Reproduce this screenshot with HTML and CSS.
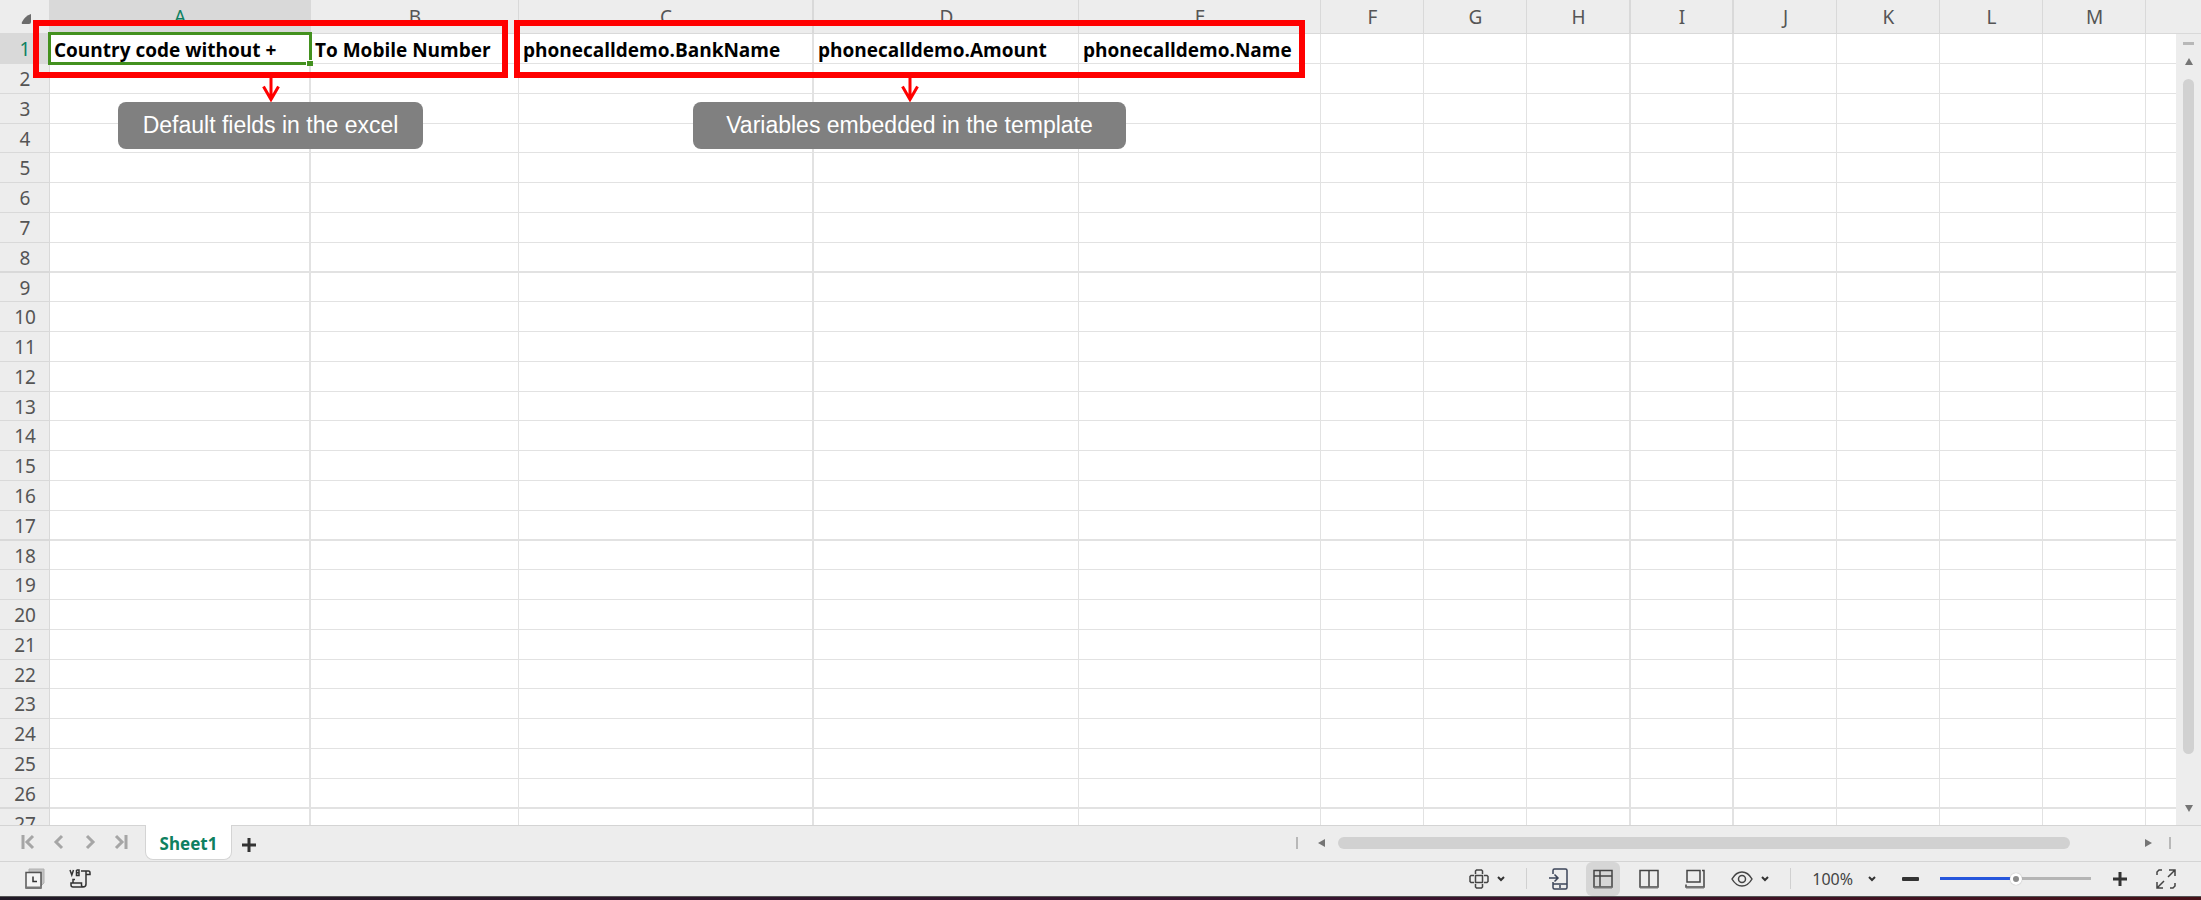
FILE: index.html
```html
<!DOCTYPE html>
<html lang="en">
<head>
<meta charset="utf-8">
<title>Sheet1</title>
<link rel="stylesheet" href="styles.css">
</head>
<body>
<main class="pane">
  <div class="sheet">
    <table class="grid">
      <colgroup><col class="c-head"><col class="c-a"><col class="c-b"><col class="c-c"><col class="c-d"><col class="c-e"><col class="c-n"><col class="c-n"><col class="c-h"><col class="c-n"><col class="c-n"><col class="c-n"><col class="c-n"><col class="c-n"><col></colgroup>
      <thead>
        <tr><th class="corner"><svg width="10" height="10" viewBox="0 0 10 10"><path d="M10 0V8Q10 10 8 10H2Q0 10 1 8Q4 2 10 0Z" fill="#6b6b6b"/></svg></th><th class="active">A</th><th>B</th><th>C</th><th>D</th><th>E</th><th>F</th><th>G</th><th>H</th><th>I</th><th>J</th><th>K</th><th>L</th><th>M</th><th></th></tr>
      </thead>
      <tbody>
        <tr class="titles"><th class="active">1</th><td>Country code without +</td><td>To Mobile Number</td><td>phonecalldemo.BankName</td><td>phonecalldemo.Amount</td><td>phonecalldemo.Name</td><td></td><td></td><td></td><td></td><td></td><td></td><td></td><td></td><td></td></tr>
        <tr><th>2<td><td><td><td><td><td><td><td><td><td><td><td><td><td>
        <tr><th>3<td><td><td><td><td><td><td><td><td><td><td><td><td><td>
        <tr><th>4<td><td><td><td><td><td><td><td><td><td><td><td><td><td>
        <tr><th>5<td><td><td><td><td><td><td><td><td><td><td><td><td><td>
        <tr><th>6<td><td><td><td><td><td><td><td><td><td><td><td><td><td>
        <tr><th>7<td><td><td><td><td><td><td><td><td><td><td><td><td><td>
        <tr><th>8<td><td><td><td><td><td><td><td><td><td><td><td><td><td>
        <tr><th>9<td><td><td><td><td><td><td><td><td><td><td><td><td><td>
        <tr><th>10<td><td><td><td><td><td><td><td><td><td><td><td><td><td>
        <tr><th>11<td><td><td><td><td><td><td><td><td><td><td><td><td><td>
        <tr><th>12<td><td><td><td><td><td><td><td><td><td><td><td><td><td>
        <tr><th>13<td><td><td><td><td><td><td><td><td><td><td><td><td><td>
        <tr><th>14<td><td><td><td><td><td><td><td><td><td><td><td><td><td>
        <tr><th>15<td><td><td><td><td><td><td><td><td><td><td><td><td><td>
        <tr><th>16<td><td><td><td><td><td><td><td><td><td><td><td><td><td>
        <tr><th>17<td><td><td><td><td><td><td><td><td><td><td><td><td><td>
        <tr><th>18<td><td><td><td><td><td><td><td><td><td><td><td><td><td>
        <tr><th>19<td><td><td><td><td><td><td><td><td><td><td><td><td><td>
        <tr><th>20<td><td><td><td><td><td><td><td><td><td><td><td><td><td>
        <tr><th>21<td><td><td><td><td><td><td><td><td><td><td><td><td><td>
        <tr><th>22<td><td><td><td><td><td><td><td><td><td><td><td><td><td>
        <tr><th>23<td><td><td><td><td><td><td><td><td><td><td><td><td><td>
        <tr><th>24<td><td><td><td><td><td><td><td><td><td><td><td><td><td>
        <tr><th>25<td><td><td><td><td><td><td><td><td><td><td><td><td><td>
        <tr><th>26<td><td><td><td><td><td><td><td><td><td><td><td><td><td>
        <tr><th>27<td><td><td><td><td><td><td><td><td><td><td><td><td><td>
      </tbody>
    </table>
    <div class="selection"><span class="handle"></span></div>
    <div class="frame frame-default"></div>
    <div class="frame frame-vars"></div>
    <div class="note note-default">
      <svg width="18" height="24" viewBox="0 0 18 24"><path d="M9 0V21M1.500 8.500L9 21.500L16.500 8.500" fill="none" stroke="#f00" stroke-width="3"/></svg>
      <p>Default fields in the excel</p>
    </div>
    <div class="note note-vars">
      <svg width="18" height="24" viewBox="0 0 18 24"><path d="M9 0V21M1.500 8.500L9 21.500L16.500 8.500" fill="none" stroke="#f00" stroke-width="3"/></svg>
      <p>Variables embedded in the template</p>
    </div>
  </div>
  <div class="vscroll">
    <span class="split-h"></span>
    <button aria-label="Scroll up"><svg width="8" height="7" viewBox="0 0 8 7"><path d="M4 0L8 7H0Z"/></svg></button>
    <div class="track"><div class="thumb"></div></div>
    <button aria-label="Scroll down"><svg width="8" height="7" viewBox="0 0 8 7"><path d="M0 0H8L4 7Z"/></svg></button>
  </div>
</main>

<nav class="tabs">
  <div class="pager">
    <button aria-label="First sheet"><svg width="14" height="16" viewBox="0 0 14 16"><path d="M2 1V15M12 2L6 8L12 14"/></svg></button>
    <button aria-label="Previous sheet"><svg width="14" height="16" viewBox="0 0 14 16"><path d="M10 2L4 8L10 14"/></svg></button>
    <button aria-label="Next sheet"><svg width="14" height="16" viewBox="0 0 14 16"><path d="M4 2L10 8L4 14"/></svg></button>
    <button aria-label="Last sheet"><svg width="14" height="16" viewBox="0 0 14 16"><path d="M2 2L8 8L2 14M12 1V15"/></svg></button>
  </div>
  <button class="tab">Sheet1</button>
  <button class="add" aria-label="Add sheet"><svg width="14" height="14" viewBox="0 0 14 14"><path d="M7 0V14M0 7H14" stroke="#333" stroke-width="3"/></svg></button>
  <div class="hscroll">
    <span class="split-v"></span>
    <button aria-label="Scroll left"><svg width="7" height="8" viewBox="0 0 7 8"><path d="M7 0V8L0 4Z"/></svg></button>
    <div class="htrack"><div class="hthumb"></div></div>
    <button aria-label="Scroll right"><svg width="7" height="8" viewBox="0 0 7 8"><path d="M0 0V8L7 4Z"/></svg></button>
    <span class="split-v"></span>
  </div>
</nav>

<footer class="status">
  <button aria-label="Backup history"><svg width="20" height="21" viewBox="0 0 20 21"><path d="M4 3V1H19V15L16 18V4H4Z" fill="#c4c4c4" stroke="#b0b0b0"/><path d="M1 4.500H16V20H1Z" fill="#f4f4f4" stroke="#555" stroke-width="1.500"/><path d="M1 18.500H16V20.500H1Z" fill="#777"/><path d="M8 8.500V13.500H12" fill="none" stroke="#333" stroke-width="1.500"/></svg></button>
  <button class="macro" aria-label="Macro editor"><svg width="22" height="20" viewBox="0 0 22 20" fill="none" stroke="#333" stroke-width="1.500"><path d="M1 1L2.800 6L4.500 1M7.500 1V6.500H10V1H7.500M7.500 3.700H10M12 2H19.500Q21 2 21 4V5.500H17M17 2V15Q17 18 14 18H4Q2 18 2 16V14H12.500V16.500Q13 18 15 18M4 14V10.500H6"/></svg></button>
  <div class="tools">
    <button class="drop" aria-label="Reading layout"><svg width="20" height="20" viewBox="0 0 20 20" fill="none" stroke="#444" stroke-width="1.500"><path d="M6.500 6.500H13.500V13.500H6.500ZM6.500 5V2L7.500 1H12.500L13.500 2V5M6.500 15V18L7.500 19H12.500L13.500 18V15M5 6.500H2L1 7.500V12.500L2 13.500H5M15 6.500H18L19 7.500V12.500L18 13.500H15"/></svg><svg class="caret" width="8" height="6" viewBox="0 0 8 6"><path d="M1 1L4 4L7 1"/></svg></button>
    <span class="rule"></span>
    <button class="phone" aria-label="Send to phone"><svg width="20" height="22" viewBox="0 0 20 22" fill="none" stroke="#3b4458" stroke-width="1.500"><path d="M5 6V2.500Q5 1 6.500 1H17.500Q19 1 19 2.500V19.500Q19 21 17.500 21H6.500Q5 21 5 19.500V14M5 16H19M12 17V20M1 10H10M6.500 6.500L10 10L6.500 13.500"/></svg></button>
    <button class="view on" aria-label="Normal view"><svg width="20" height="20" viewBox="0 0 20 20" fill="none" stroke="#444" stroke-width="1.500"><path d="M1 1.500H19V18H1ZM1 7H19M7 1.500V18"/><path d="M1 18.500H19" stroke="#777" stroke-width="2"/></svg></button>
    <button class="view" aria-label="Page break view"><svg width="20" height="20" viewBox="0 0 20 20" fill="none" stroke="#444" stroke-width="1.500"><path d="M1 1.500H19V18H1ZM10 1.500V18"/><path d="M1 18.500H19" stroke="#777" stroke-width="2"/></svg></button>
    <button class="view" aria-label="Page layout view"><svg width="20" height="20" viewBox="0 0 20 20" fill="none" stroke="#444" stroke-width="1.500"><path d="M2 1.500H15V13H2ZM17 1.500H19V18H1V15.500"/><path d="M1 18.500H19" stroke="#777" stroke-width="2"/></svg></button>
    <button class="drop eye" aria-label="Eye protection"><svg width="22" height="16" viewBox="0 0 22 16" fill="none" stroke="#444" stroke-width="1.500"><path d="M1 8Q5 1 11 1T21 8Q17 15 11 15T1 8Z"/><circle cx="11" cy="8" r="3.500"/></svg><svg class="caret" width="8" height="6" viewBox="0 0 8 6"><path d="M1 1L4 4L7 1"/></svg></button>
    <span class="rule"></span>
    <button class="drop zoom">100%<svg class="caret" width="8" height="6" viewBox="0 0 8 6"><path d="M1 1L4 4L7 1"/></svg></button>
    <button class="minus" aria-label="Zoom out"><svg width="17" height="4" viewBox="0 0 17 4"><rect width="17" height="4" rx="1" fill="#333"/></svg></button>
    <input class="slider" type="range" min="0" max="100" value="50" aria-label="Zoom level">
    <button class="plus" aria-label="Zoom in"><svg width="14" height="14" viewBox="0 0 14 14"><path d="M7 0V14M0 7H14" stroke="#333" stroke-width="3"/></svg></button>
    <button aria-label="Full screen"><svg width="20" height="20" viewBox="0 0 20 20" fill="none" stroke="#444" stroke-width="1.500"><path d="M6 1H3L1 3V6M14 19H17L19 17V14M12 8L18.500 1.500M13 1H19V7M8 12L1.500 18.500M7 19H1V13"/></svg></button>
  </div>
</footer>
<div class="desktop"></div>
</body>
</html>
```
FILE: styles.css
```css
* { box-sizing: border-box; }
body {
  margin: 0;
  height: 100vh;
  display: flex;
  flex-direction: column;
  background: #ededed;
  color: #444;
  font-family: "Noto Sans", sans-serif;
  overflow: hidden;
}
button {
  display: flex;
  align-items: center;
  justify-content: center;
  margin: 0;
  padding: 0;
  border: 0;
  background: none;
  font: inherit;
  color: inherit;
}
svg { display: block; flex: none; }

.pane { flex: 1; min-height: 0; display: flex; }
.sheet { position: relative; flex: 1; min-width: 0; overflow: hidden; background: #fff; }

.grid { width: 100%; table-layout: fixed; border-collapse: separate; border-spacing: 0; }
.c-head { width: 50px; }
.c-a { width: 261px; }
.c-b { width: 208px; }
.c-c { width: 295px; }
.c-d { width: 265px; }
.c-e { width: 242px; }
.c-h { width: 104px; }
.c-n { width: 103px; }
.grid th, .grid td {
  height: 30px;
  padding: 1px 0 0;
  border: 0 solid #e2e2e2;
  border-width: 0 1px 1px 0;
  line-height: 26px;
  white-space: nowrap;
}
.grid th { padding-left: 1px; background: #ededed; border-color: #d9d9d9; color: #555; font-size: 19px; font-weight: 400; }
.grid thead th { height: 34px; }
.grid .active { background: #d9d9d9; color: #0e8060; }
.grid tr > :nth-child(2), .grid tr > :nth-child(4), .grid tr > :nth-child(9), .grid tr > :nth-child(10) { border-right-width: 2px; }
.grid tr > :last-child { border-right-width: 0; }
.grid tbody tr:nth-child(9n) > *, .grid tbody tr:nth-child(9n+4) > * { height: 29px; }
.grid tbody tr:nth-child(9n+8) > * { border-bottom-width: 2px; }
.corner svg { margin: 4px 0 0 20px; }
.grid .titles td { padding: 2px 0 0 4px; color: #000; font-family: "Open Sans", sans-serif; font-size: 19px; font-weight: 700; }

.selection { position: absolute; left: 48px; top: 32px; width: 264px; height: 33px; border: 3px solid #43911f; }
.handle { position: absolute; right: -4px; bottom: -4px; width: 7px; height: 6px; border: solid #fff; border-width: 1px 0 0 1px; background: #43911f; }
.frame { position: absolute; top: 20px; height: 58px; border: 6px solid #f00; }
.frame-default { left: 33px; width: 475px; }
.frame-vars { left: 514px; width: 791px; }
.note { position: absolute; top: 78px; display: flex; flex-direction: column; align-items: center; }
.note-default { left: 118px; width: 305px; }
.note-vars { left: 693px; width: 433px; }
.note p {
  width: 100%;
  margin: 0;
  border-radius: 8px;
  background: #808080;
  color: #fff;
  font: 23px/47px "Liberation Sans", sans-serif;
  text-align: center;
}

.vscroll { width: 25px; display: flex; flex-direction: column; align-items: center; padding: 42px 0 13px; fill: #757575; background: linear-gradient(#d9d9d9, #d9d9d9) 0 33px / 100% 1px no-repeat; }
.split-h { width: 11px; height: 3px; margin-bottom: 13px; background: #b8b8b8; }
.track { flex: 1; width: 11px; margin: 14px 0 0; }
.thumb { height: 93%; border-radius: 6px; background: #d1d1d1; }

.tabs { height: 37px; flex: none; display: flex; border: solid #d4d4d4; border-width: 1px 0; }
.pager { width: 145px; padding: 0 17px 4px 21px; display: flex; align-items: center; justify-content: space-between; fill: none; stroke: #a6a6a6; stroke-width: 3; }
.tab {
  width: 87px;
  height: 35px;
  margin-top: -1px;
  padding-top: 2px;
  border: solid #d4d4d4;
  border-width: 0 1px 1px;
  border-radius: 0 0 8px 8px;
  background: #fff;
  color: #0e8060;
  font-size: 17px;
  font-weight: 700;
}
.add { margin: 3px 0 0 10px; height: 32px; }
.hscroll { flex: 1; margin-left: 1040px; padding: 0 30px 1px 0; display: flex; align-items: center; fill: #757575; }
.split-v { width: 2px; height: 12px; background: #b8b8b8; }
.hscroll button:first-of-type { margin: 0 13px 0 20px; }
.hscroll button:last-of-type { margin-right: 17px; }
.htrack { flex: 1; padding-right: 3px; }
.hthumb { width: 91%; height: 12px; border-radius: 6px; background: #d1d1d1; }

.status { height: 34px; flex: none; display: flex; align-items: center; padding: 0 0 1px 25px; }
.macro { margin-left: 24px; }
.tools { margin-left: auto; padding-right: 25px; display: flex; align-items: center; }
.drop { gap: 8px; }
.caret { fill: none; stroke: #333; stroke-width: 2; }
.rule { width: 1px; height: 21px; margin: 0 21px; background: #d0d0d0; }
.view { width: 34px; height: 34px; border-radius: 6px; margin-right: 12px; }
.on { background: #d6d6d6; }
.phone { margin-right: 18px; }
.eye { margin-left: 7px; }
.zoom { gap: 15px; font-size: 16px; }
.minus { margin: 0 21px 0 26px; }
.slider { width: 151px; height: 14px; margin: 0; appearance: none; background: linear-gradient(90deg, #2656dc 50%, #b5b5b5 50%) center / 100% 3px no-repeat; }
.slider::-webkit-slider-thumb { appearance: none; width: 12px; height: 12px; border: 3px solid #fff; border-radius: 50%; background: #8a8a8a; box-shadow: 0 0 1px #999; }
.plus { margin: 0 29px 0 22px; }
.desktop { height: 4px; flex: none; border-top: 1px solid #555; background: linear-gradient(90deg, #211a26, #381430 60%, #471219); }
```
